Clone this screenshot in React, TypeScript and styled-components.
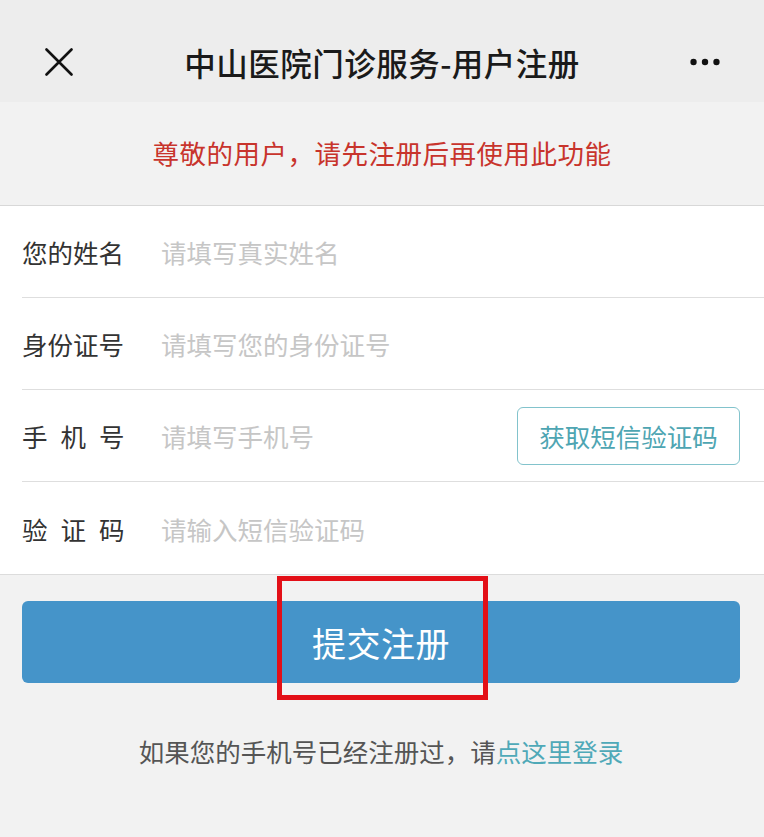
import React from "react";
import styled, { createGlobalStyle } from "styled-components";

const Global = createGlobalStyle`
  html, body { margin: 0; padding: 0; background: #f2f2f2; }
  body { font-family: "Noto Sans CJK SC", "Noto Sans", sans-serif; }
  * { box-sizing: border-box; }
`;

const Page = styled.div`
  width: 764px;
  min-height: 837px;
  background: #f2f2f2;
  display: flex;
  flex-direction: column;
`;

const NavBar = styled.header`
  height: 102px;
  background: #ededed;
  display: flex;
  align-items: center;
  justify-content: space-between;
  padding: 21px 44px 0 44px;
`;

const NavIcon = styled.div`
  width: 30px;
  height: 30px;
  display: flex;
  align-items: center;
  justify-content: center;
`;

const NavTitle = styled.h1`
  margin: 0;
  font-size: 31.5px;
  font-weight: 500;
  color: #1a1a1a;
  letter-spacing: 0.5px;
`;

const Notice = styled.div`
  height: 104px;
  display: flex;
  align-items: center;
  justify-content: center;
  padding-bottom: 2px;
  color: #c8342c;
  font-size: 26.5px;
  letter-spacing: 0.5px;
  border-bottom: 1px solid #d8d8d8;
`;

const Form = styled.div`
  background: #ffffff;
  border-bottom: 1px solid #dcdcdc;
  padding-left: 22px;
`;

const Row = styled.div<{ $last?: boolean }>`
  height: 92px;
  display: flex;
  align-items: center;
  border-bottom: ${(p) => (p.$last ? "none" : "1px solid #dedede")};
  padding-right: 24px;
`;

const Label = styled.span<{ $spaced?: boolean }>`
  width: 139px;
  flex-shrink: 0;
  font-size: 25.5px;
  color: #333333;
  letter-spacing: ${(p) => (p.$spaced ? "13px" : "0px")};
`;

const Input = styled.input`
  flex: 1;
  min-width: 0;
  border: none;
  outline: none;
  background: transparent;
  font-family: "Noto Sans CJK SC", "Noto Sans", sans-serif;
  font-size: 25.5px;
  color: #333;
  padding: 0;
  &::placeholder { color: #c6c6c6; }
`;

const CodeButton = styled.button`
  height: 58px;
  width: 223px;
  border: 1.5px solid #82c3cc;
  border-radius: 6px;
  background: #fff;
  color: #4ea5b2;
  font-family: "Noto Sans CJK SC", "Noto Sans", sans-serif;
  font-size: 25.5px;
  padding: 0;
`;

const Bottom = styled.div`
  position: relative;
  padding: 26px 24px 0 22px;
  display: flex;
  flex-direction: column;
  align-items: stretch;
`;

const Submit = styled.button`
  height: 82px;
  border: none;
  border-radius: 6px;
  background: #4594c9;
  color: #ffffff;
  font-family: "Noto Sans CJK SC", "Noto Sans", sans-serif;
  font-size: 34px;
  letter-spacing: 0.5px;
`;

const Highlight = styled.div`
  position: absolute;
  left: 277px;
  top: 1px;
  width: 211px;
  height: 124px;
  border: 5px solid #e30f17;
  pointer-events: none;
`;

const Footer = styled.p`
  margin: 49px 0 0;
  text-align: center;
  font-size: 25.5px;
  color: #555555;
`;

const Link = styled.a`
  color: #4fa9b8;
  text-decoration: none;
`;

export default function App() {
  return (
    <Page>
      <Global />
      <NavBar>
        <NavIcon>
          <svg width="28" height="28" viewBox="0 0 28 28">
            <path d="M1.5 1.5 L26.5 26.5 M26.5 1.5 L1.5 26.5" stroke="#111" strokeWidth="2.6" strokeLinecap="round" />
          </svg>
        </NavIcon>
        <NavTitle>中山医院门诊服务-用户注册</NavTitle>
        <NavIcon>
          <svg width="34" height="10" viewBox="0 0 34 10">
            <circle cx="4" cy="5" r="3.6" fill="#111" />
            <circle cx="17" cy="5" r="3.6" fill="#111" />
            <circle cx="30" cy="5" r="3.6" fill="#111" />
          </svg>
        </NavIcon>
      </NavBar>
      <Notice>尊敬的用户，请先注册后再使用此功能</Notice>
      <Form>
        <Row>
          <Label>您的姓名</Label>
          <Input placeholder="请填写真实姓名" />
        </Row>
        <Row>
          <Label>身份证号</Label>
          <Input placeholder="请填写您的身份证号" />
        </Row>
        <Row>
          <Label $spaced>手机号</Label>
          <Input placeholder="请填写手机号" />
          <CodeButton>获取短信验证码</CodeButton>
        </Row>
        <Row $last>
          <Label $spaced>验证码</Label>
          <Input placeholder="请输入短信验证码" />
        </Row>
      </Form>
      <Bottom>
        <Submit>提交注册</Submit>
        <Highlight />
        <Footer>
          如果您的手机号已经注册过，请<Link href="#">点这里登录</Link>
        </Footer>
      </Bottom>
    </Page>
  );
}
